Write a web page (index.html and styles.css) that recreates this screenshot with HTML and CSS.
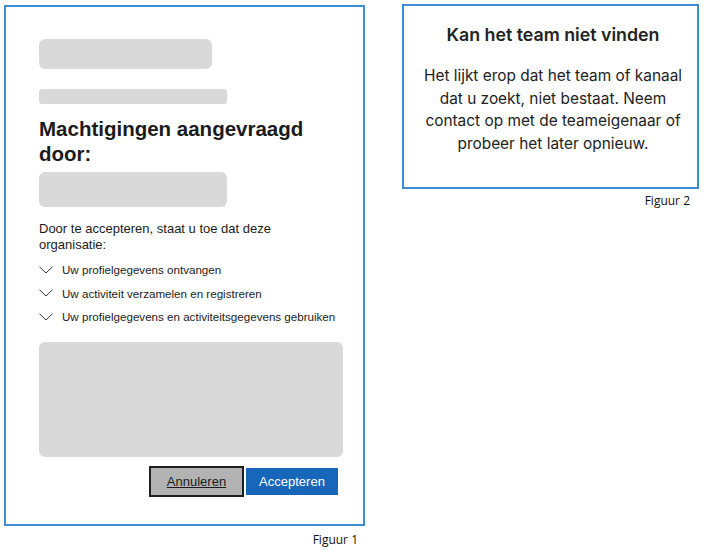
FILE: index.html
```html
<!DOCTYPE html>
<html lang="nl">
<head>
    <meta charset="UTF-8">
    <meta name="viewport" content="width=device-width, initial-scale=1.0">
    <title>Figuren</title>
    <link rel="stylesheet" href="styles.css">
</head>
<body>
    <div class="figure figure-consent">
        <div class="frame consent">
            <div class="skeleton skeleton-logo"></div>
            <div class="skeleton skeleton-line"></div>
            <h1>Machtigingen aangevraagd door:</h1>
            <div class="skeleton skeleton-app"></div>

            <p class="intro">Door te accepteren, staat u toe dat deze organisatie:</p>
            <ul class="permissions">
                <li>
                    <svg class="chevron" width="14" height="8" viewBox="0 0 14 8"><polyline points="0.5,0.8 7,7 13.5,0.8" fill="none" stroke="#333" stroke-width="1"/></svg>
                    Uw profielgegevens ontvangen
                </li>
                <li>
                    <svg class="chevron" width="14" height="8" viewBox="0 0 14 8"><polyline points="0.5,0.8 7,7 13.5,0.8" fill="none" stroke="#333" stroke-width="1"/></svg>
                    Uw activiteit verzamelen en registreren
                </li>
                <li>
                    <svg class="chevron" width="14" height="8" viewBox="0 0 14 8"><polyline points="0.5,0.8 7,7 13.5,0.8" fill="none" stroke="#333" stroke-width="1"/></svg>
                    Uw profielgegevens en activiteitsgegevens gebruiken
                </li>
            </ul>

            <div class="skeleton skeleton-box"></div>

            <div class="actions">
                <button class="btn btn-cancel">Annuleren</button>
                <button class="btn btn-accept">Accepteren</button>
            </div>
        </div>
        <p class="caption">Figuur 1</p>
    </div>

    <div class="figure figure-error">
        <div class="frame not-found">
            <h2>Kan het team niet vinden</h2>
            <p>Het lijkt erop dat het team of kanaal dat u zoekt, niet bestaat. Neem contact op met de teameigenaar of probeer het later opnieuw.</p>
        </div>
        <p class="caption">Figuur 2</p>
    </div>
</body>
</html>
```

FILE: styles.css
```css
* {
    margin: 0;
    padding: 0;
    box-sizing: border-box;
}

body {
    font-family: 'Liberation Sans', Arial, sans-serif;
    color: #1b1b1b;
    background: #fff;
    display: flex;
    align-items: flex-start;
    gap: 37px;
    padding: 4px 0 0 4px;
}

.frame {
    border: 2px solid #3d8dd6;
    background: #fff;
}

.caption {
    font-family: 'Open Sans', sans-serif;
    font-size: 12px;
    line-height: 16px;
    color: #111;
    text-align: right;
}

/* Figure 1: consent dialog */
.figure-consent {
    width: 361px;
    margin-top: 1px;
}

.figure-consent .caption {
    margin-top: 6px;
    padding-right: 7px;
}

.consent {
    height: 521px;
    padding: 32px 0 0 33px;
}

.skeleton {
    background: #d9d9d9;
    border-radius: 6px;
}

.skeleton-logo {
    width: 173px;
    height: 30px;
}

.skeleton-line {
    width: 188px;
    height: 15px;
    margin-top: 20px;
    border-radius: 3px;
}

.consent h1 {
    font-size: 20.5px;
    line-height: 25px;
    font-weight: bold;
    margin-top: 12px;
    width: 290px;
}

.skeleton-app {
    width: 188px;
    height: 35px;
    margin-top: 6px;
}

.intro {
    font-size: 13px;
    line-height: 16px;
    margin-top: 14px;
    width: 260px;
}

.permissions {
    list-style: none;
    margin-top: 5px;
    font-size: 11.6px;
}

.permissions li {
    display: flex;
    align-items: center;
    height: 23.5px;
}

.chevron {
    margin-right: 9px;
    flex-shrink: 0;
}

.skeleton-box {
    width: 304px;
    height: 115px;
    margin-top: 13px;
}

.actions {
    width: 304px;
    display: flex;
    justify-content: flex-end;
    align-items: center;
    gap: 2px;
    padding-right: 5px;
    margin-top: 9px;
}

.btn {
    font-family: 'Liberation Sans', Arial, sans-serif;
    font-size: 13px;
    border: none;
    cursor: pointer;
}

.btn-cancel {
    width: 95px;
    height: 31px;
    background: #b3b3b3;
    border: 2px solid #1f1f1f;
    color: #1b1b1b;
    text-decoration: underline;
}

.btn-accept {
    width: 92px;
    height: 27px;
    background: #1766b9;
    color: #fff;
}

/* Figure 2: team not found */
.figure-error {
    width: 297px;
}

.figure-error .caption {
    margin-top: 4px;
    padding-right: 9px;
}

.not-found {
    height: 185px;
    padding: 18px 13px 0 18px;
    text-align: center;
    font-family: 'Inter', sans-serif;
    color: #222;
}

.not-found h2 {
    font-size: 17.8px;
    line-height: 22px;
    font-weight: 600;
}

.not-found p {
    font-size: 15.4px;
    line-height: 22.5px;
    margin-top: 19px;
}
```
